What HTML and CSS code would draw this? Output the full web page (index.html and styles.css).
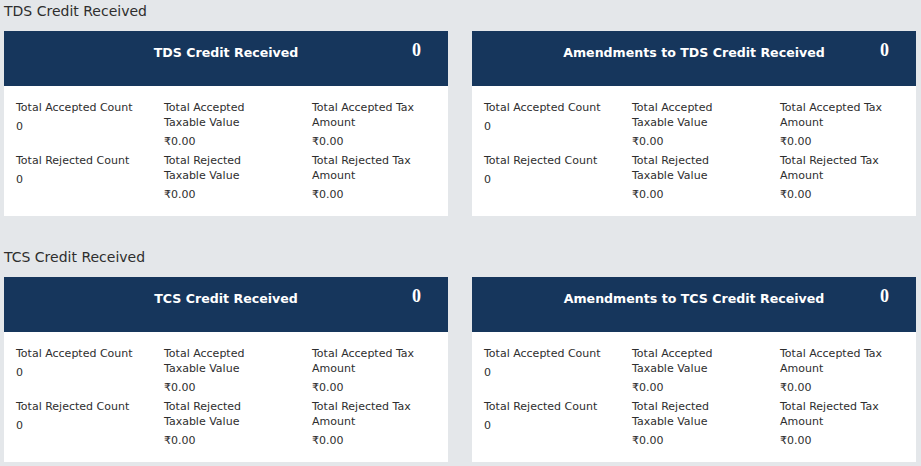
FILE: index.html
```html
<!DOCTYPE html>
<html>
<head>
<meta charset="utf-8">
<link rel="stylesheet" href="styles.css">
</head>
<body>
<div class="page">
  <section class="section">
    <h2 class="section-title">TDS Credit Received</h2>
    <div class="cards">
      <div class="card">
        <div class="card-head"><span class="card-title">TDS Credit Received</span><span class="card-count">0</span></div>
        <div class="card-body">
          <div class="cell"><div class="label">Total Accepted Count</div><div class="value">0</div></div>
          <div class="cell"><div class="label">Total Accepted Taxable Value</div><div class="value">₹0.00</div></div>
          <div class="cell"><div class="label">Total Accepted Tax Amount</div><div class="value">₹0.00</div></div>
          <div class="cell"><div class="label">Total Rejected Count</div><div class="value">0</div></div>
          <div class="cell"><div class="label">Total Rejected Taxable Value</div><div class="value">₹0.00</div></div>
          <div class="cell"><div class="label">Total Rejected Tax Amount</div><div class="value">₹0.00</div></div>
        </div>
      </div>
      <div class="card">
        <div class="card-head"><span class="card-title">Amendments to TDS Credit Received</span><span class="card-count">0</span></div>
        <div class="card-body">
          <div class="cell"><div class="label">Total Accepted Count</div><div class="value">0</div></div>
          <div class="cell"><div class="label">Total Accepted Taxable Value</div><div class="value">₹0.00</div></div>
          <div class="cell"><div class="label">Total Accepted Tax Amount</div><div class="value">₹0.00</div></div>
          <div class="cell"><div class="label">Total Rejected Count</div><div class="value">0</div></div>
          <div class="cell"><div class="label">Total Rejected Taxable Value</div><div class="value">₹0.00</div></div>
          <div class="cell"><div class="label">Total Rejected Tax Amount</div><div class="value">₹0.00</div></div>
        </div>
      </div>
    </div>
  </section>
  <section class="section">
    <h2 class="section-title">TCS Credit Received</h2>
    <div class="cards">
      <div class="card">
        <div class="card-head"><span class="card-title">TCS Credit Received</span><span class="card-count">0</span></div>
        <div class="card-body">
          <div class="cell"><div class="label">Total Accepted Count</div><div class="value">0</div></div>
          <div class="cell"><div class="label">Total Accepted Taxable Value</div><div class="value">₹0.00</div></div>
          <div class="cell"><div class="label">Total Accepted Tax Amount</div><div class="value">₹0.00</div></div>
          <div class="cell"><div class="label">Total Rejected Count</div><div class="value">0</div></div>
          <div class="cell"><div class="label">Total Rejected Taxable Value</div><div class="value">₹0.00</div></div>
          <div class="cell"><div class="label">Total Rejected Tax Amount</div><div class="value">₹0.00</div></div>
        </div>
      </div>
      <div class="card">
        <div class="card-head"><span class="card-title">Amendments to TCS Credit Received</span><span class="card-count">0</span></div>
        <div class="card-body">
          <div class="cell"><div class="label">Total Accepted Count</div><div class="value">0</div></div>
          <div class="cell"><div class="label">Total Accepted Taxable Value</div><div class="value">₹0.00</div></div>
          <div class="cell"><div class="label">Total Accepted Tax Amount</div><div class="value">₹0.00</div></div>
          <div class="cell"><div class="label">Total Rejected Count</div><div class="value">0</div></div>
          <div class="cell"><div class="label">Total Rejected Taxable Value</div><div class="value">₹0.00</div></div>
          <div class="cell"><div class="label">Total Rejected Tax Amount</div><div class="value">₹0.00</div></div>
        </div>
      </div>
    </div>
  </section>
</div>
</body>
</html>
```
FILE: styles.css
```css
html, body {
  margin: 0;
  padding: 0;
  background: #e4e7ea;
}
body {
  font-family: "DejaVu Sans", Verdana, sans-serif;
  color: #2e2e2e;
}
.page {
  padding: 0 5px 0 4px;
  display: flex;
  flex-direction: column;
  gap: 30px;
}
.section-title {
  margin: 0;
  height: 31px;
  font-size: 14px;
  font-weight: normal;
  line-height: 22px;
  color: #2e2e2e;
}
.cards {
  display: grid;
  grid-template-columns: 1fr 1fr;
  gap: 24px;
}
.card {
  background: #fff;
}
.card-head {
  position: relative;
  height: 55px;
  background: #16365c;
  color: #fff;
  display: flex;
  justify-content: center;
  padding-top: 14px;
  box-sizing: border-box;
}
.card-title {
  font-size: 12.6px;
  font-weight: bold;
  line-height: 16px;
}
.card-count {
  position: absolute;
  right: 27px;
  top: 8px;
  font-family: "Liberation Serif", "Times New Roman", serif;
  font-weight: bold;
  font-size: 18px;
  line-height: 22px;
}
.card-body {
  display: grid;
  grid-template-columns: repeat(3, 1fr);
  row-gap: 4px;
  padding: 14px 0;
  font-size: 11px;
  line-height: 15px;
}
.cell {
  padding: 0 16px 0 12px;
}
.value {
  margin-top: 4px;
}
```
